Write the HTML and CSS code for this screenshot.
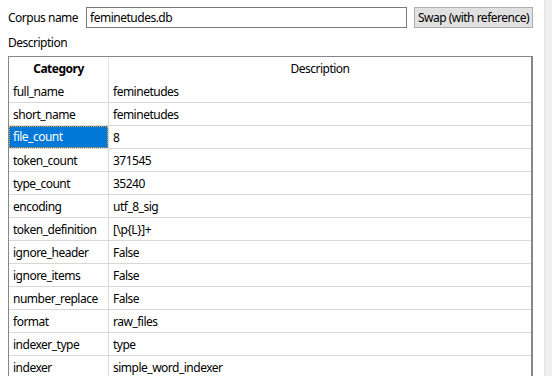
FILE: index.html
```html
<!DOCTYPE html>
<html lang="en">
<head>
  <meta charset="UTF-8">
  <title>Corpus</title>
  <link rel="stylesheet" href="styles.css">
</head>
<body>
  <div class="window">
    <div class="main">
      <!-- nombre del corpus -->
      <div class="name-row">
        <label class="label" for="corpus-name">Corpus name</label>
        <input class="name-input" id="corpus-name" type="text" value="feminetudes.db">
        <button class="swap-btn">Swap (with reference)</button>
      </div>

      <div class="label desc-label">Description</div>

      <div class="grid-box">
        <table class="grid">
          <thead>
            <tr>
              <th class="col-cat">Category</th>
              <th>Description</th>
            </tr>
          </thead>
          <tbody>
            <tr><td>full_name</td><td>feminetudes</td></tr>
            <tr><td>short_name</td><td>feminetudes</td></tr>
            <tr><td class="selected"><span class="focus">file_count</span></td><td>8</td></tr>
            <tr><td>token_count</td><td>371545</td></tr>
            <tr><td>type_count</td><td>35240</td></tr>
            <tr><td>encoding</td><td>utf_8_sig</td></tr>
            <tr><td>token_definition</td><td>[\p{L}]+</td></tr>
            <tr><td>ignore_header</td><td>False</td></tr>
            <tr><td>ignore_items</td><td>False</td></tr>
            <tr><td>number_replace</td><td>False</td></tr>
            <tr><td>format</td><td>raw_files</td></tr>
            <tr><td>indexer_type</td><td>type</td></tr>
            <tr><td>indexer</td><td>simple_word_indexer</td></tr>
          </tbody>
        </table>
      </div>
    </div>
    <div class="scrollbar"></div>
  </div>
</body>
</html>
```

FILE: styles.css
```css
/* ventana estilo Windows */
html, body {
  margin: 0;
  height: 100%;
  overflow: hidden;
}

body {
  font-family: "Noto Sans", "Open Sans", sans-serif;
  font-size: 12px;
  letter-spacing: -0.5px;
  color: #000;
  background-color: #fff;
}

.window {
  display: flex;
  height: 376px;
}

.main {
  flex: 1;
  padding: 7px 11px 0 8px;
  min-width: 0;
}

.scrollbar {
  width: 7px;
  border-left: 1px solid #e3e3e3;
  background-color: #f0f0f0;
}

.name-row {
  display: flex;
  align-items: center;
  height: 21px;
}

.label {
  line-height: 16px;
}

.name-row .label {
  margin-right: 8px;
}

.name-input {
  flex: 1;
  height: 21px;
  box-sizing: border-box;
  border: 1px solid #7a7a7a;
  padding: 0 3px;
  font: inherit;
  letter-spacing: -0.5px;
  color: #000;
  margin: 0 7px 0 0;
  min-width: 0;
}

.swap-btn {
  height: 21px;
  box-sizing: border-box;
  width: 119px;
  border: 1px solid #adadad;
  background-color: #e1e1e1;
  font: inherit;
  letter-spacing: -0.5px;
  white-space: nowrap;
  padding: 0;
  color: #000;
}

.desc-label {
  margin-top: 7px;
  height: 21px;
}

.grid-box {
  border: 1px solid #828790;
  border-right-width: 2px;
  background-color: #fff;
  height: 400px;
}

.grid {
  width: 100%;
  border-collapse: collapse;
}

.grid th {
  font-weight: normal;
  height: 23px;
  padding: 0;
  text-align: center;
  border-left: 1px solid #e5e5e5;
}

.grid th.col-cat {
  font-weight: bold;
  border-left: none;
  width: 99px;
}

.grid td {
  height: 22px;
  padding: 0 0 0 4px;
  border-bottom: 1px solid #d8d8d8;
  border-left: 1px solid #d8d8d8;
  white-space: nowrap;
}

.grid td:first-child {
  border-left: none;
}

.grid td.selected {
  background-color: #0078d7;
  color: #fff;
  padding: 0;
}

.focus {
  display: block;
  height: 20px;
  line-height: 20px;
  padding-left: 3px;
  border: 1px dotted #f0a030;
}
```
